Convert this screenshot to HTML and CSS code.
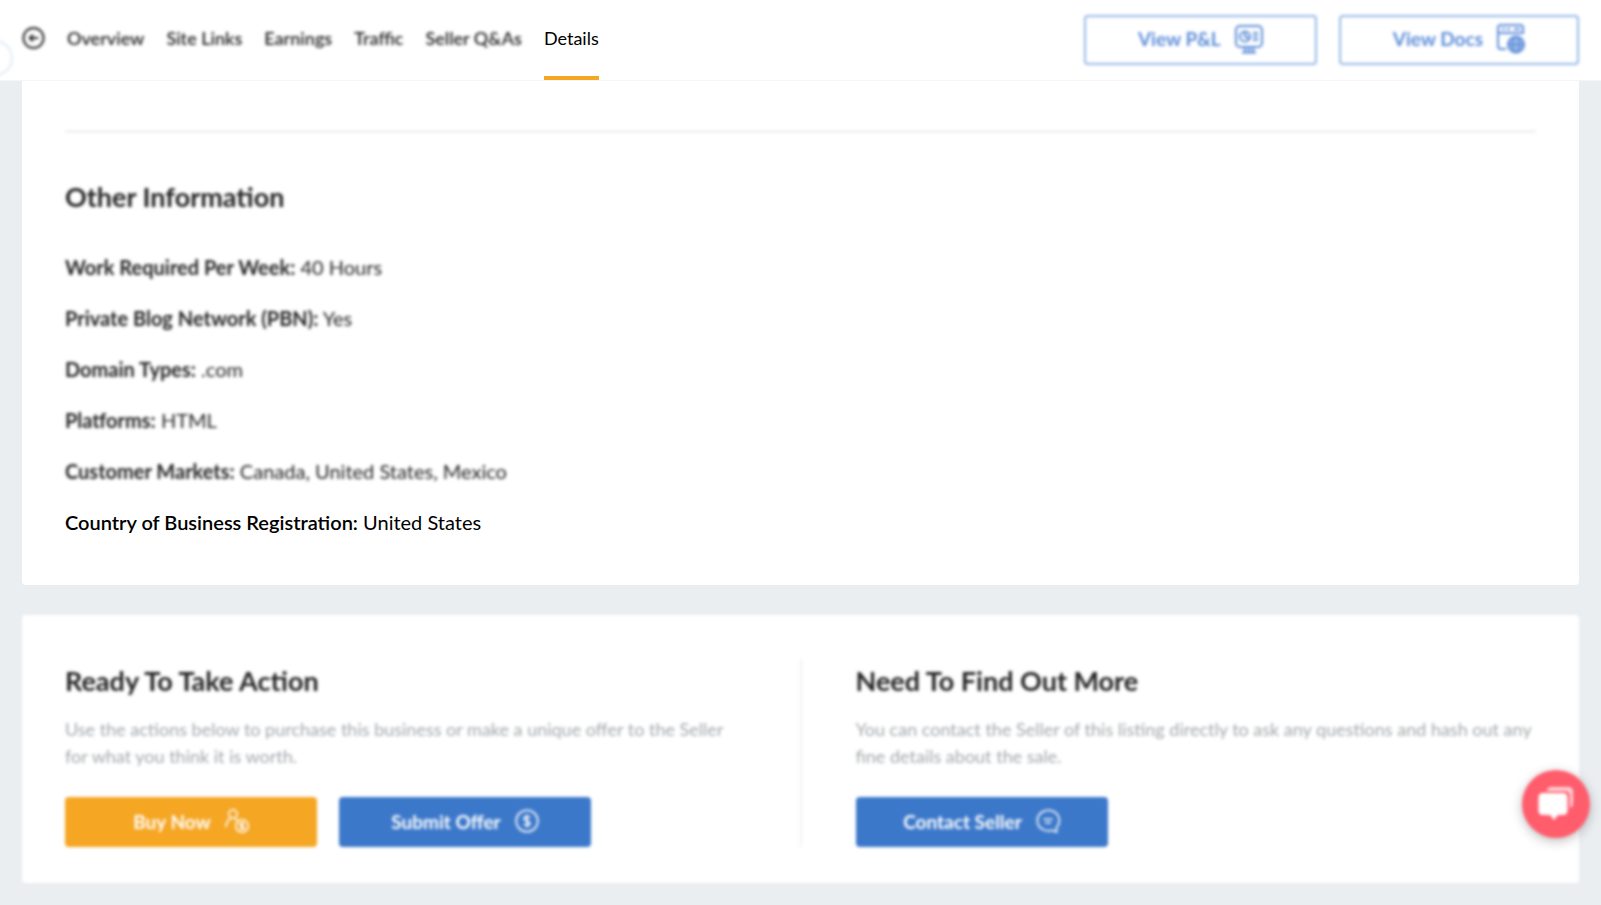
FILE: index.html
```
<!DOCTYPE html>
<html lang="en">
<head>
  <meta charset="UTF-8" />
  <meta name="viewport" content="width=device-width,initial-scale=1.0" />
  <title>Listing Details</title>
  <link rel="stylesheet" href="styles.css">
</head>
<body>
  <header class="header">
    <span class="side-handle soft"></span>
    <nav class="tabs">
      <a href="#" class="back soft" aria-label="Back">
        <svg width="23" height="24" viewBox="0 0 24 24" fill="none" stroke="currentColor" stroke-width="2">
          <circle cx="12" cy="12" r="10.5"/>
          <path d="M17 12H8M11.5 8.5L8 12l3.5 3.5"/>
        </svg>
      </a>
      <a href="#overview" class="tab soft">Overview</a>
      <a href="#links" class="tab soft">Site Links</a>
      <a href="#earnings" class="tab soft">Earnings</a>
      <a href="#traffic" class="tab soft">Traffic</a>
      <a href="#qa" class="tab soft">Seller Q&amp;As</a>
      <a href="#details" class="tab active">Details</a>
    </nav>
    <div class="header-actions soft">
      <button class="btn btn-outline">
        View P&amp;L
        <svg width="28" height="30" viewBox="0 0 28 30" fill="none" stroke="currentColor" stroke-width="2">
          <rect x="1" y="2" width="26" height="21" rx="4"/>
          <circle cx="10" cy="12.5" r="5"/>
          <path d="M10 7.500v5l4 2M18 9h5M18 12.500h5M18 16h5"/>
          <path d="M10 23v5M14 23v5M18 23v5M7 28.500h14"/>
        </svg>
      </button>
      <button class="btn btn-outline">
        View Docs
        <svg width="28" height="30" viewBox="0 0 28 30" fill="none" stroke="currentColor" stroke-width="2">
          <path d="M9 25H4a3 3 0 0 1-3-3V4a3 3 0 0 1 3-3h19a3 3 0 0 1 3 3v6M1 9h25"/>
          <path d="M5 5h3M10 5h3M17 5h6"/>
          <circle cx="19" cy="20.500" r="8" fill="currentColor" fill-opacity="0.6"/>
          <ellipse cx="19" cy="20.500" rx="3.500" ry="8" stroke-width="1.500"/>
          <path d="M11 20.500h16" stroke-width="1.500"/>
        </svg>
      </button>
    </div>
  </header>

  <main class="content">
    <section class="card info" id="details">
      <hr class="divider soft">
      <h2 class="soft">Other Information</h2>
      <ul class="info-list">
        <li class="soft"><b>Work Required Per Week:</b> 40 Hours</li>
        <li class="soft"><b>Private Blog Network (PBN):</b> Yes</li>
        <li class="soft"><b>Domain Types:</b> .com</li>
        <li class="soft"><b>Platforms:</b> HTML</li>
        <li class="soft"><b>Customer Markets:</b> Canada, United States, Mexico</li>
        <li class="highlight"><b>Country of Business Registration:</b> United States</li>
      </ul>
    </section>

    <section class="card actions soft">
      <div class="action">
        <h2>Ready To Take Action</h2>
        <p>Use the actions below to purchase this business or make a unique offer to the Seller for what you think it is worth.</p>
        <div class="buttons">
          <button class="btn btn-orange">
            Buy Now
            <svg width="24" height="24" viewBox="0 0 24 24" fill="none" stroke="currentColor" stroke-width="1.600">
              <circle cx="8" cy="5" r="4.200"/>
              <path d="M1 18c0-4 2-7 5-8.500M10 9.500l3 2.500"/>
              <circle cx="17" cy="17" r="6.200"/>
              <path d="M19 14.800c-1-1-4-.8-4 .8s4 1.200 4 2.800-3 1.800-4 .8M17 13v8"/>
            </svg>
          </button>
          <button class="btn btn-blue">
            Submit Offer
            <svg width="24" height="24" viewBox="0 0 24 24" fill="none" stroke="currentColor" stroke-width="1.600">
              <circle cx="12" cy="12" r="10.800"/>
              <path d="M15 9c-1-2-6-2-6 .5s6 2.300 6 5-5 2.500-6 .5M12 5.500v13"/>
            </svg>
          </button>
        </div>
      </div>
      <div class="action">
        <h2>Need To Find Out More</h2>
        <p>You can contact the Seller of this listing directly to ask any questions and hash out any fine details about the sale.</p>
        <div class="buttons">
          <button class="btn btn-blue">
            Contact Seller
            <svg width="24" height="24" viewBox="0 0 24 24" fill="none" stroke="currentColor" stroke-width="1.600">
              <path d="M20.500 23v-4.500A11 10.300 0 1 0 16 21.300z"/>
              <path d="M7.500 10.200h9M9 13.800h6"/>
            </svg>
          </button>
        </div>
      </div>
    </section>
  </main>

  <button class="chat soft" aria-label="Open chat">
    <svg width="36" height="36" viewBox="0 0 36 36" fill="#fff">
      <path d="M9 3.500Q10 1 13 1h17q5 0 5 5v11q0 4-3 5V10q0-5-5-5H9z" opacity="0.750"/>
      <path d="M5 7h20q4.500 0 4.500 4.500v13q0 4.500-4.500 4.500h-5l-4 5-4-5H5Q.5 29 .5 24.500v-13Q.5 7 5 7z"/>
    </svg>
  </button>
</body>
</html>
```

FILE: styles.css
```
* {
  box-sizing: border-box;
}
body {
  margin: 0;
  min-height: 100vh;
  font-family: Lato, sans-serif;
  font-size: 20px;
  color: #222;
  background-color: #eaeef1;
}
/* everything out of focus except the highlighted items */
.soft {
  filter: blur(1px) blur(1px);
}
.header {
  position: relative;
  display: flex;
  justify-content: space-between;
  height: 81px;
  padding: 0 22px;
  background-color: #fff;
  border-bottom: 1px solid #f3f5f7;
}
.side-handle {
  position: absolute;
  top: 40px;
  left: -23px;
  width: 36px;
  height: 36px;
  border: 2px solid #e3eaf5;
  border-radius: 50%;
}
.tabs {
  display: flex;
  gap: 22px;
}
.tab, .back {
  display: flex;
  align-items: center;
  padding-bottom: 1px;
  border-bottom: 4px solid transparent;
  font-size: 18px;
  color: #222;
  text-decoration: none;
}
.tab.soft {
  font-weight: 600;
}
.tab.active {
  color: #000;
  border-bottom-color: #f5a623;
}
.header-actions {
  display: flex;
  gap: 22px;
  padding-top: 15px;
}
.btn {
  display: flex;
  align-items: center;
  justify-content: center;
  gap: 14px;
  width: 252px;
  height: 50px;
  padding: 0 0 2px;
  border: none;
  border-radius: 4px;
  font-family: inherit;
  font-size: 19px;
  font-weight: bold;
  color: #fff;
  cursor: pointer;
}
.btn-outline {
  width: auto;
  padding: 0 52px 3px;
  border: 2px solid #94b6e8;
  background-color: #fff;
  color: #5b8cd8;
}
.btn-orange { background-color: #f5a623; }
.btn-blue { background-color: #3c78ca; }
.content {
  padding: 0 22px 22px;
}
.card {
  background-color: #fff;
  border-radius: 4px;
}
.info {
  padding: 49px 43px 49px;
  border-radius: 0 0 4px 4px;
}
.divider {
  height: 3px;
  margin: 0 0 47px;
  border: none;
  background-color: #f1f2f6;
}
h2 {
  margin: 0;
  font-size: 27px;
  line-height: 34px;
}
.info-list {
  display: flex;
  flex-direction: column;
  gap: 24px;
  margin: 40px 0 0;
  padding: 0;
  list-style: none;
  line-height: 27px;
}
.info-list b {
  font-weight: bold;
}
.info-list .highlight {
  color: #000;
}
.info-list .highlight b {
  font-weight: 600;
}
.actions {
  display: flex;
  margin-top: 30px;
  padding: 44px 43px 36px;
}
.action {
  flex: 1;
  padding-top: 5px;
}
.action:first-child {
  padding-right: 54px;
  border-right: 2px solid #f1f2f6;
}
.action + .action {
  padding-left: 54px;
}
.action p {
  margin: 18px 0 27px;
  font-size: 18px;
  line-height: 27px;
  color: #a2a7ab;
}
.buttons {
  display: flex;
  gap: 22px;
}
.chat {
  position: fixed;
  right: 11px;
  bottom: 67px;
  display: flex;
  align-items: center;
  justify-content: center;
  width: 68px;
  height: 68px;
  padding: 0;
  border: none;
  border-radius: 50%;
  background-color: #ff5c6c;
  box-shadow: 0 3px 12px rgba(0,0,0,0.25);
  cursor: pointer;
}
```
